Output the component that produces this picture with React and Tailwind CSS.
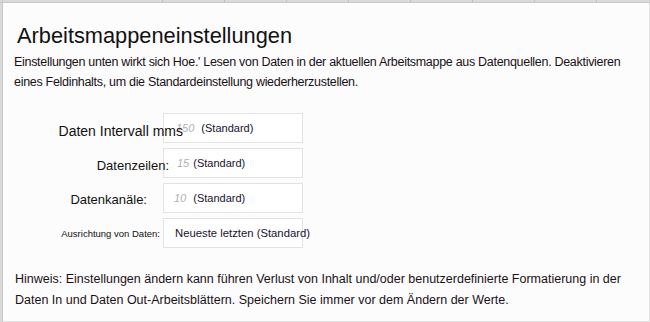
export default function App() {
  const font = { fontFamily: '"Liberation Sans", Arial, sans-serif' };
  return (
    <div className="w-[650px] h-[322px] bg-[#e9e9e9] flex flex-col overflow-hidden text-[#111]" style={font}>
      <div className="h-[3px] flex shrink-0 bg-[#dadada] border-b border-[#c8c8c8]">
        <div className="w-[3px] border-r border-[#c8c8c8]"></div>
        <div className="w-[160px] border-r border-[#bdbdbd]"></div>
        <div className="w-[62px] border-r border-[#bdbdbd]"></div>
        <div className="w-[62px] border-r border-[#bdbdbd]"></div>
        <div className="w-[62px] border-r border-[#bdbdbd]"></div>
        <div className="w-[62px] border-r border-[#bdbdbd]"></div>
        <div className="w-[62px] border-r border-[#bdbdbd]"></div>
        <div className="w-[62px] border-r border-[#bdbdbd]"></div>
        <div className="w-[62px] border-r border-[#bdbdbd]"></div>
        <div className="flex-1"></div>
      </div>
      <div className="flex flex-1">
        <div className="w-[3px] shrink-0 bg-[#dadada] border-r border-[#c8c8c8]"></div>
        <div className="flex-1 bg-[#fcfcfc] border-r border-b border-[#e0e0e0] flex flex-col">
          <div className="pl-[14px] mt-[19px] text-[21.8px] leading-[28px] text-[#111] whitespace-nowrap">Arbeitsmappeneinstellungen</div>
          <div className="pl-[11px] mt-[2px] text-[12.5px] tracking-[-0.3px] leading-[20px] text-[#1a1018] whitespace-nowrap">
            <div>Einstellungen unten wirkt sich Hoe.' Lesen von Daten in der aktuellen Arbeitsmappe aus Datenquellen. Deaktivieren</div>
            <div>eines Feldinhalts, um die Standardeinstellung wiederherzustellen.</div>
          </div>
          <div className="mt-[21px] flex flex-col gap-[5px]">
            <div className="flex items-center h-[30px]">
              <div className="w-[160px] flex justify-end">
                <span className="text-[14px] mr-[-20px] mt-[7px] relative z-10 text-[#111] whitespace-nowrap">Daten Intervall mms</span>
              </div>
              <div className="w-[140px] h-[30px] bg-white border border-[#e3e3e3] flex items-center pl-[12px] text-[11px] gap-[7px]">
                <span className="italic text-[#b0b0b0]">150</span>
                <span className="text-[#1a1030]">(Standard)</span>
              </div>
            </div>
            <div className="flex items-center h-[30px]">
              <div className="w-[160px] flex justify-end">
                <span className="text-[13px] mr-[-6px] mt-[5px] relative z-10 text-[#111] whitespace-nowrap">Datenzeilen:</span>
              </div>
              <div className="w-[140px] h-[30px] bg-white border border-[#e3e3e3] flex items-center pl-[13px] text-[11px] gap-[4px]">
                <span className="italic text-[#b0b0b0]">15</span>
                <span className="text-[#1a1030]">(Standard)</span>
              </div>
            </div>
            <div className="flex items-center h-[30px]">
              <div className="w-[160px] flex justify-end">
                <span className="text-[13px] mr-[16px] mt-[3px] text-[#111] whitespace-nowrap">Datenkanäle:</span>
              </div>
              <div className="w-[140px] h-[30px] bg-white border border-[#e3e3e3] flex items-center pl-[10px] text-[11px] gap-[7px]">
                <span className="italic text-[#b0b0b0]">10</span>
                <span className="text-[#1a1030]">(Standard)</span>
              </div>
            </div>
            <div className="flex items-center h-[30px]">
              <div className="w-[160px] flex justify-end">
                <span className="text-[9.5px] mr-[3px] mt-[2px] text-[#111] whitespace-nowrap">Ausrichtung von Daten:</span>
              </div>
              <div className="w-[140px] h-[30px] bg-white border border-[#e3e3e3] flex items-center pl-[11px] text-[11.3px] whitespace-nowrap">
                <span className="text-[#1a1030]">Neueste letzten (Standard)</span>
              </div>
            </div>
          </div>
          <div className="pl-[12px] mt-[21px] text-[12.5px] leading-[21px] text-[#1a1018] whitespace-nowrap">
            <div>Hinweis: Einstellungen ändern kann führen Verlust von Inhalt und/oder benutzerdefinierte Formatierung in der</div>
            <div>Daten In und Daten Out-Arbeitsblättern. Speichern Sie immer vor dem Ändern der Werte.</div>
          </div>
        </div>
      </div>
    </div>
  );
}
